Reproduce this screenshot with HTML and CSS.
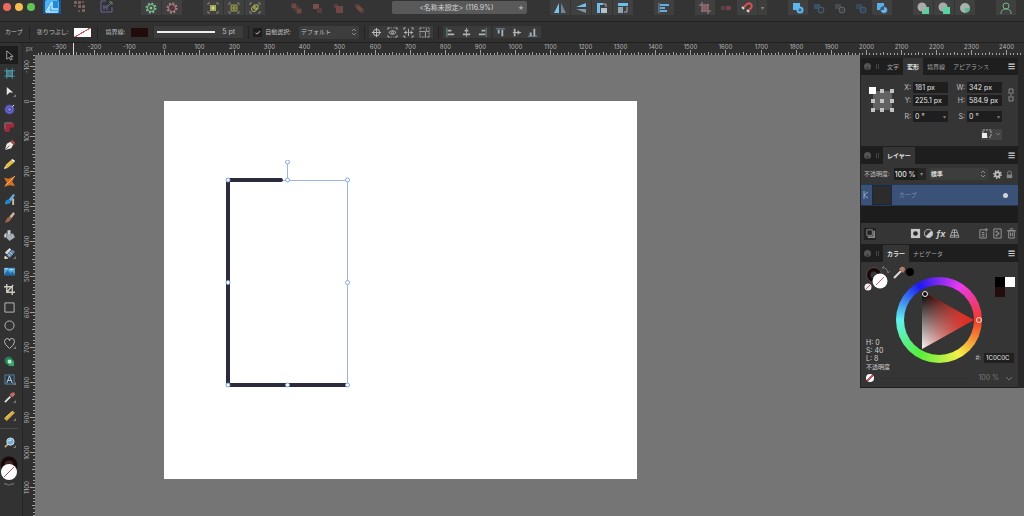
FILE: index.html
```html
<!DOCTYPE html>
<html lang="ja">
<head>
<meta charset="utf-8">
<title>名称未設定</title>
<link rel="stylesheet" href="styles.css">
</head>
<body>
<div class="app">
<header class="toolbar">
  <div class="lights"><button class="light red" aria-label="閉じる"></button><button class="light amber" aria-label="しまう"></button><button class="light green" aria-label="拡大"></button></div>
  <div class="personas">
    <button class="persona on" aria-label="デザイン"><svg viewBox="0 0 18 15"><rect x="2" y="0" width="14" height="13" rx="2" fill="#4db4ef"/><path d="M3 12 9 2v7h6M3 12h12M6 7v5" stroke="#d9f3ff" fill="none"/><path d="M10 1h5v7h-5z" fill="#2588d2"/></svg></button>
    <button class="persona" aria-label="ピクセル"><svg viewBox="0 0 18 15"><path d="M4 1h3v3H4zM8 1h3v3H8zM8 5h3v3H8zM12 5h3v3h-3zM12 9h3v3h-3z" fill="#79625e"/><path d="M12 1h2v2h-2zM4 5h2v2H4zM8 10h2v2H8z" fill="#615a58"/></svg></button>
    <button class="persona" aria-label="書き出し"><svg viewBox="0 0 18 15" fill="none" stroke="#69659a"><path d="M9 1H4v11h11V7M7 5v5M10 5v5M6 7h5"/><path d="M11 6l4-4M12 2h3v3" stroke="#62866f"/></svg></button>
  </div>
  <div class="group first">
    <button class="tb" aria-label="設定"><svg viewBox="0 0 12 12"><circle cx="6" cy="6" r="4.500" stroke="#75b88a" stroke-width="2" stroke-dasharray="2 1.500" fill="none"/><circle cx="6" cy="6" r="3.500" stroke="#82c495" fill="none"/><circle cx="6" cy="6" r="1.500" fill="#82c495"/></svg></button>
    <button class="tb" aria-label="初期設定"><svg viewBox="0 0 12 12"><circle cx="6" cy="6" r="4.500" stroke="#a98286" stroke-width="2" stroke-dasharray="2 1.500" fill="none"/><circle cx="6" cy="6" r="3.500" stroke="#a98286" fill="#4a3336"/><path d="M4 8l4-4" stroke="#774348"/></svg></button>
  </div>
  <div class="group">
    <button class="tb" aria-label="グループ化"><svg viewBox="0 0 12 12"><path d="M1 3V1h2M9 1h2v2M1 9v2h2M9 11h2V9" stroke="#858875" fill="none"/><path d="M3 3h6v6H3z" fill="#a8a95a"/><path d="M5 5h2v2H5z" fill="#e0df9b"/></svg></button>
    <button class="tb" aria-label="グループ解除"><svg viewBox="0 0 12 12"><path d="M1 3V1h2M9 1h2v2M1 9v2h2M9 11h2V9" stroke="#858875" fill="none"/><path d="M3 3h6v6H3zM3 6h6M6 3v6" stroke="#999c52" fill="#56582f"/></svg></button>
    <button class="tb" aria-label="複合"><svg viewBox="0 0 12 12"><path d="M1 3V1h2M9 1h2v2M1 9v2h2M9 11h2V9" stroke="#858875" fill="none"/><g stroke="#b7b85f" fill="none"><circle cx="5" cy="7" r="2.500"/><path d="M5 3h4v4H5z"/></g></svg></button>
  </div>
  <div class="group dim">
    <button class="tb" aria-label="最背面"><svg viewBox="0 0 12 12"><path d="M2 2h4v4H2zM7 7h4v4H7zM4 9l5-5" fill="#6e4943" stroke="#6e4943"/></svg></button>
    <button class="tb" aria-label="背面"><svg viewBox="0 0 12 12"><path d="M2 2h6v5H2z" fill="#795049"/><path d="M6 6h5v5H6z" fill="#51403d"/></svg></button>
    <button class="tb" aria-label="前面"><svg viewBox="0 0 12 12"><path d="M2 2h4v4H2z" fill="#55403d"/><path d="M4 4h7v7H4z" fill="#6f4843"/></svg></button>
    <button class="tb" aria-label="最前面"><svg viewBox="0 0 12 12"><path d="M2 2h4v4H2zM7 7h4v4H7z" fill="#51403d"/><path d="M3 6l3-3 4 4-3 3z" fill="#7a473f"/></svg></button>
  </div>
  <div class="doc"><span class="doc-name">&lt;名称未設定&gt; (116.9%)</span><span class="star">★</span></div>
  <div class="group">
    <button class="tb" aria-label="左右反転"><svg viewBox="0 0 12 12"><path d="M5 1v10H0z" fill="#78c3ed"/><path d="M7 1v10h5z" fill="#718594"/></svg></button>
    <button class="tb" aria-label="上下反転"><svg viewBox="0 0 12 12"><path d="M11 1v4H1z" fill="#6ebeed"/><path d="M11 11V7H1z" fill="#8294a2"/></svg></button>
    <button class="tb" aria-label="左に回転"><svg viewBox="0 0 12 12"><path d="M1 1h6v2H4v8H1z" fill="#6ebeed"/><path d="M5 6h6v5H5z" fill="#b8c2c9"/><path d="M7 2h3v3" stroke="#a7b0b5" fill="none"/></svg></button>
    <button class="tb" aria-label="右に回転"><svg viewBox="0 0 12 12"><path d="M1 1h10v3H1z" fill="#6ebeed"/><path d="M1 5h5v6H1z" fill="#90a6b5"/><path d="M10 5v5H7" stroke="#a7b0b5" fill="none"/></svg></button>
  </div>
  <div class="group"><button class="tb" aria-label="整列"><svg viewBox="0 0 12 12"><path d="M1 1v10" stroke="#8494a1"/><path d="M2 2h9v2H2zM2 5h5v2H2zM2 8h7v2H2z" fill="#63ace0"/></svg></button></div>
  <div class="group">
    <button class="tb" aria-label="グリッド"><svg viewBox="0 0 12 12"><path d="M3 0v10M9 2v10M0 3h10M2 9h10M3 6h6M6 3v6" stroke="#aa8389" fill="none"/><path d="M4 4h4v4H4z" fill="#905962"/></svg></button>
    <button class="tb flat" aria-label="ピクセル整合"><svg viewBox="0 0 12 12"><path d="M1 4h4v4H1z" fill="#5c4145"/><path d="M6 4h5v4H6z" fill="#734148"/></svg></button>
    <div class="split"><button class="tb" aria-label="スナップ"><svg viewBox="0 0 12 12"><path d="M2 6l4-4c3-2 6 1 4 4L7 9" stroke="#d9514e" stroke-width="2" fill="none"/><path d="M1 5l2 2M6 8l2 2" stroke="#d4d4d4" stroke-width="2"/></svg></button><button class="more" aria-label="スナップ設定">▾</button></div>
  </div>
  <div class="group">
    <button class="tb" aria-label="追加"><svg viewBox="0 0 12 12"><path d="M1 1h7v7H1z" fill="#5fb7ee"/><circle cx="8" cy="8" r="3.500" fill="#5fb7ee"/><path d="M6 8h4M8 6v4" stroke="#245e85"/></svg></button>
    <button class="tb flat" aria-label="減算"><svg viewBox="0 0 12 12"><path d="M1 2h6v5H1z" fill="#365267"/><circle cx="8" cy="8" r="3" fill="#303b43" stroke="#51606b"/></svg></button>
    <button class="tb flat" aria-label="交差"><svg viewBox="0 0 12 12"><path d="M1 2h6v5H1z" fill="#454b50"/><circle cx="8" cy="8" r="3" fill="#384149" stroke="#62676b"/></svg></button>
    <button class="tb flat" aria-label="型抜き"><svg viewBox="0 0 12 12"><path d="M1 2h6v5H1z" fill="#36495b"/><circle cx="8" cy="8" r="3" fill="#344253" stroke="#445f77"/></svg></button>
    <button class="tb" aria-label="分割"><svg viewBox="0 0 12 12"><path d="M1 1h7v7H1z" fill="#5baee6"/><circle cx="8" cy="8" r="3.500" fill="#6fb9ea" stroke="#36526a"/><path d="M5 5h3v3H5z" fill="#365b7d"/></svg></button>
  </div>
  <div class="group">
    <button class="tb" aria-label="背後に挿入"><svg viewBox="0 0 12 12"><path d="M5 5h7v7H5z" fill="#5bd0a0"/><circle cx="5" cy="5" r="4.500" fill="#a9aaaa"/></svg></button>
    <button class="tb" aria-label="上に挿入"><svg viewBox="0 0 12 12"><circle cx="5" cy="5" r="4.500" fill="#a9aaaa"/><path d="M5 5h7v7H5z" fill="#5bd0a0"/></svg></button>
    <button class="tb" aria-label="内側に挿入"><svg viewBox="0 0 12 12"><circle cx="6" cy="6" r="5" fill="#a9b1ad"/><path d="M6 6h5a5 5 0 0 1-5 5z" fill="#5bbb95"/></svg></button>
  </div>
  <div class="group"><button class="tb" aria-label="アカウント"><svg viewBox="0 0 12 12" fill="none" stroke="#78b684"><circle cx="6" cy="4" r="3"/><path d="M1 12c0-4 2-5 5-5s5 1 5 5"/></svg></button></div>
</header>

<section class="context">
  <span class="lead">カーブ</span><i class="sep"></i>
  <span>塗りつぶし:</span><button class="swatch none" aria-label="塗りつぶし"></button><i class="sep"></i>
  <span>境界線:</span><button class="swatch stroke" aria-label="境界線"></button>
  <button class="width"><i></i>5 pt</button><i class="sep tight"></i>
  <label class="auto"><input type="checkbox" checked>自動選択:</label>
  <select class="mode" aria-label="自動選択"><option>デフォルト</option></select><i class="sep tight"></i>
  <div class="minis">
    <button aria-label="中心を表示"><svg viewBox="0 0 12 12" fill="none" stroke="#c4c4c4"><circle cx="6" cy="6" r="3.500"/><path d="M6 1v10M1 6h10"/></svg></button>
    <button aria-label="選択を隠す"><svg viewBox="0 0 12 12" fill="none" stroke="#bbb"><path d="M1 3V1h2M9 1h2v2M1 9v2h2M9 11h2V9M4 1h1M7 1h1M4 11h1M7 11h1"/><path d="M2 6q4-4 8 0q-4 4-8 0"/><circle cx="6" cy="6" r="1"/></svg></button>
    <button aria-label="変形"><svg viewBox="0 0 12 12" fill="none" stroke="#bbb"><path d="M1 3V1h2M9 1h2v2M1 9v2h2M9 11h2V9M6 2v8M1 6h4M7 6h4M3 4v4M9 4v4"/></svg></button>
    <button aria-label="サイクル"><svg viewBox="0 0 12 12" fill="none" stroke="#aaa"><path d="M1 1h10v10M1 1v10h10" stroke-dasharray="2 1"/><path d="M1 5h6v6M8 2v3h3"/></svg></button>
  </div><i class="sep tight"></i>
  <div class="minis">
    <button aria-label="左揃え"><svg viewBox="0 0 12 12"><path d="M2 1v10" stroke="#68957a"/><path d="M3 3h4v2H3zM3 7h7v2H3z" fill="#aab5ae"/></svg></button>
    <button aria-label="中央揃え"><svg viewBox="0 0 12 12"><path d="M4 3h4v2H4zM2 7h8v2H2z" fill="#aeb5b1"/><path d="M6 1v10" stroke="#aaa"/></svg></button>
    <button aria-label="右揃え"><svg viewBox="0 0 12 12"><path d="M10 1v10" stroke="#68957a"/><path d="M5 3h4v2H5zM2 7h7v2H2z" fill="#aab5ae"/></svg></button>
  </div>
  <div class="minis">
    <button aria-label="上揃え"><svg viewBox="0 0 12 12"><path d="M1 2h10" stroke="#7295b0"/><path d="M3 3h2v4H3zM7 3h2v7H7z" fill="#a9b2b9"/></svg></button>
    <button aria-label="上下中央揃え"><svg viewBox="0 0 12 12"><path d="M3 2h2v8H3zM7 4h2v4H7z" fill="#aaa"/><path d="M2 6h9" stroke="#bbb"/></svg></button>
    <button aria-label="下揃え"><svg viewBox="0 0 12 12"><path d="M1 10h10" stroke="#7295b0"/><path d="M3 6h2v4H3zM7 2h2v8H7z" fill="#a9b2b9"/></svg></button>
  </div>
</section>

<main class="body">
<nav class="tools" aria-label="ツール">
  <button class="tool on" aria-label="移動"><svg viewBox="0 0 12 12"><path d="M3 1l7 6H7l2 3-2 1-1-3-3 2z" fill="#151515" stroke="#aaa"/></svg></button>
  <button class="tool" aria-label="アートボード"><svg viewBox="0 0 12 12"><path d="M3 0v12M9 0v12M0 3h12M0 9h12" stroke="#3c8d98"/><path d="M3 3h6v6H3z" fill="#43707b" stroke="#5aa9b1"/></svg></button>
  <button class="tool fly" aria-label="ノード"><svg viewBox="0 0 12 12"><path d="M3 1l7 6H6l-3 3z" fill="#e4e4e4"/></svg></button>
  <button class="tool" aria-label="等高線"><svg viewBox="0 0 12 12"><circle cx="6" cy="6" r="5.500" fill="#4f4bac"/><circle cx="6" cy="6" r="3.500" fill="none" stroke="#7977c4"/><circle cx="6" cy="6" r="1.500" fill="#8b89d3"/><path d="M9 3l2-2" stroke="#fff"/></svg></button>
  <button class="tool" aria-label="コーナー"><svg viewBox="0 0 12 12"><path d="M1 11V5q0-4 4-4h6v5H8q-2 0-2 5z" fill="#a5273d"/><path d="M1 8V1h8" stroke="#8b8588" fill="none"/></svg></button>
  <button class="tool" aria-label="ペン"><svg viewBox="0 0 12 12"><path d="M1 11l2-7 4-2 3 3-2 4z" fill="#eee8e4"/><path d="M7 1l2-1 3 3-1 3z" fill="#bd4b46"/><path d="M1 11l5-5" stroke="#666"/></svg></button>
  <button class="tool" aria-label="鉛筆"><svg viewBox="0 0 12 12"><path d="M1 9l7-7 3 3-7 6z" fill="#e3b93d"/><path d="M1 9l3 2-4 1z" fill="#f4e7cf"/><path d="M8 2l1-1 3 2-1 2z" fill="#fff"/><path d="M2 8l6-5" stroke="#f4da80"/></svg></button>
  <button class="tool" aria-label="ベクトルブラシ"><svg viewBox="0 0 12 12"><path d="M0 2l5 1 7-3-3 6 3 5-6-1-6 2 3-5z" fill="#d47223"/><path d="M2 10L12 0" stroke="#f5b276"/></svg></button>
  <button class="tool" aria-label="ペイントブラシ"><svg viewBox="0 0 12 12"><path d="M5 6l5-6 2 1-4 7z" fill="#66a9df"/><path d="M1 11q0-5 4-5l3 2q-2 4-7 3" fill="#2684cf"/><path d="M10 5v7" stroke="#dabea1" stroke-width="2"/></svg></button>
  <button class="tool" aria-label="ナイフ"><svg viewBox="0 0 12 12"><path d="M6 5l4-5 2 2-4 5z" fill="#cbb3a0"/><path d="M1 12l2-5 3-2 2 2-2 3z" fill="#a26650"/></svg></button>
  <button class="tool" aria-label="塗りつぶしツール"><svg viewBox="0 0 12 12"><path d="M4 3l6 1 2 4-6 4-4-4z" fill="#a6adb7"/><path d="M4 3V0h3v6M0 5l3-2v5H0z" fill="#d4d7dc" stroke="#777d87"/></svg></button>
  <button class="tool fly" aria-label="透明"><svg viewBox="0 0 12 12"><path d="M1 5l5-5 2 2-5 5z" fill="#d6d7da"/><path d="M3 8l6-6 3 2-6 7z" fill="#5b8bc0"/><path d="M1 9l3 2-3 1zM6 4l3 3M4 6l3 3" fill="#e8c58d" stroke="#efe0c0"/></svg></button>
  <button class="tool" aria-label="画像配置"><svg viewBox="0 0 12 12"><path d="M0 2h12v8H0z" fill="#4ea3d9"/><path d="M0 9l4-4 3 3 2-2 3 3v1H0z" fill="#226cab"/><path d="M6 4h4M1 3h3" stroke="#d4ecf6"/></svg></button>
  <button class="tool" aria-label="切り抜き"><svg viewBox="0 0 12 12"><path d="M3 0v9h9M0 3h9v9M3 9l7-8" fill="none" stroke="#d0cbc2" stroke-width="1.500"/></svg></button>
  <button class="tool" aria-label="長方形"><svg viewBox="0 0 12 12"><path d="M1 1h10v10H1z" fill="none" stroke="#c2c2c2"/></svg></button>
  <button class="tool" aria-label="楕円"><svg viewBox="0 0 12 12"><circle cx="6" cy="6" r="5" fill="none" stroke="#c2c2c2"/></svg></button>
  <button class="tool fly" aria-label="ハート"><svg viewBox="0 0 12 12"><path d="M6 11.500Q.5 7 .5 4t3-3.500Q6 .5 6 3 6 .5 8.500.5q3 0 3 3.500T6 11.500z" fill="none" stroke="#c2c2c2"/></svg></button>
  <button class="tool" aria-label="シェイプビルダー"><svg viewBox="0 0 12 12"><circle cx="5" cy="5" r="4.500" fill="#287b59"/><path d="M5 5h6v6H5z" fill="#35a56c"/><path d="M4 4h4v4H4z" fill="#b3efc9"/></svg></button>
  <button class="tool fly" aria-label="テキスト"><svg viewBox="0 0 12 12"><path d="M1 1h10v10H1z" fill="#283949" stroke="#5586a5"/><path d="M3 10l3-8 3 8M4 7h4" fill="none" stroke="#c6d2df"/></svg></button>
  <button class="tool fly" aria-label="スポイト"><svg viewBox="0 0 12 12"><path d="M1 11l6-6" stroke="#ddd" stroke-width="2"/><path d="M6 3l3 3 3-3q0-4-4-2z" fill="#c06862"/></svg></button>
  <button class="tool fly" aria-label="計測"><svg viewBox="0 0 12 12"><path d="M0 9l9-8 3 2-9 9z" fill="#d7aa3d"/><path d="M2 8l8-7" stroke="#f2da7b"/></svg></button>
  <hr class="rule">
  <button class="tool fly" aria-label="ズーム"><svg viewBox="0 0 12 12"><path d="M1 11l4-4" stroke="#cca369" stroke-width="2"/><circle cx="7" cy="5" r="4" fill="#79add8" stroke="#d6e5ee"/><path d="M5 4l3-1" stroke="#fff"/></svg></button>
  <button class="inks" aria-label="カラー"><svg viewBox="0 0 18 32"><circle cx="9" cy="9" r="6.500" fill="#3a2a29" stroke="#170a09" stroke-width="4"/><circle cx="9" cy="16" r="8" fill="#fff"/><path d="M4 21L14 11" stroke="#c34b53"/><path d="M5 27q4 4 8 0M5 27v2M13 27v2" fill="none" stroke="#777"/></svg></button>
</nav>

<section class="work">
  <span class="unit">px</span>
  <svg class="ruler-x" id="rx" aria-hidden="true"></svg>
  <svg class="ruler-y" id="ry" aria-hidden="true"></svg>
  <div class="canvas">
    <div class="page"></div>
    <svg class="art" viewBox="0 0 140 240">
      <path d="M72.500 3v17.500M13 20.500h119.500V225H13V20.500" fill="none" stroke="#9cb6dc"/>
      <path d="M66 20H13v205h119" fill="none" stroke="#2b2b3b" stroke-width="4" stroke-linecap="round" stroke-linejoin="round"/>
      <g fill="#fff" stroke="#86a9d9"><circle cx="72.500" cy="2" r="2"/><circle cx="13" cy="20" r="2"/><circle cx="72.500" cy="20" r="2"/><circle cx="132.500" cy="20" r="2"/><circle cx="13" cy="122.500" r="2"/><circle cx="132.500" cy="122.500" r="2"/><circle cx="13" cy="225" r="2"/><circle cx="72.500" cy="225" r="2"/><circle cx="132.500" cy="225" r="2"/></g>
    </svg>
  </div>
</section>

<aside class="studio">
  <section class="panel">
    <header class="tabs"><button class="close" aria-label="閉じる">×</button><i class="grip"></i><button class="tab">文字</button><button class="tab on">変形</button><button class="tab">境界線</button><button class="tab">アピアランス</button><button class="menu" aria-label="メニュー">☰</button></header>
    <div class="transform">
      <svg class="anchor" viewBox="0 0 26 26"><path d="M4 4h19v19H4z" fill="#626262"/><g fill="#c2c2c2"><path d="M11 2h4v4h-4zM21 2h4v4h-4zM2 12h4v4H2zM11 12h4v4h-4zM21 12h4v4h-4zM2 21h4v4H2zM11 21h4v4h-4zM21 21h4v4h-4z"/></g><path d="M0 0h7v7H0z" fill="#fff"/></svg>
      <div class="fields">
        <label>X:<input value="181 px"></label><label>W:<input value="342 px"></label>
        <label>Y:<input value="225.1 px"></label><label>H:<input value="584.9 px"></label>
        <label class="drop">R:<input value="0 °"></label><label class="drop">S:<input value="0 °"></label>
      </div>
      <button class="link" aria-label="縦横比"><svg viewBox="0 0 6 14" fill="none" stroke="#8b8b8b"><path d="M1 6V1h4v5M1 8v5h4V8M3 4v6"/></svg></button>
      <button class="scale" aria-label="拡大縮小"><svg viewBox="0 0 20 10"><path d="M2 1h8v7H2z" fill="none" stroke="#aaa" stroke-dasharray="2 1"/><path d="M1 4h5v5H1z" fill="#eee"/><path d="M15 4l2 2 2-2" fill="none" stroke="#777"/></svg></button>
    </div>
  </section>
  <section class="panel">
    <header class="tabs"><button class="close" aria-label="閉じる">×</button><i class="grip"></i><button class="tab on">レイヤー</button><button class="menu" aria-label="メニュー">☰</button></header>
    <div class="opacity">
      <label>不透明度:<input value="100 %"></label><button class="arrow" aria-label="不透明度の選択">▾</button>
      <select aria-label="描画モード"><option>標準</option></select>
      <button class="ico" aria-label="ブレンド範囲"><svg viewBox="0 0 10 10"><circle cx="5" cy="5" r="2.500" fill="none" stroke="#bdbdbd" stroke-width="2"/><circle cx="5" cy="5" r="4" fill="none" stroke="#bdbdbd" stroke-width="2" stroke-dasharray="1.500 1.600"/></svg></button>
      <button class="ico" aria-label="ロック"><svg viewBox="0 0 10 10"><path d="M2 5h6v4H2z" fill="#858585"/><path d="M3 5V2q2-2 4 0v3" fill="none" stroke="#858585"/></svg></button>
    </div>
    <div class="layer"><svg class="knot" viewBox="0 0 6 8"><path d="M1 0v8M5 1L1 4l4 3" fill="none" stroke="#92a7c7"/></svg><i class="thumb"></i><span>カーブ</span><input type="checkbox" checked aria-label="表示"></div>
    <div class="blank"></div>
    <footer class="foot">
      <button class="boxed" aria-label="編集"><svg viewBox="0 0 12 12" fill="none" stroke="#888"><path d="M2 2h6v6H2z"/><path d="M4 9v1h6V4H9" stroke-width="2"/></svg></button>
      <span class="mid">
      <button aria-label="マスク"><svg viewBox="0 0 12 12"><path d="M1 1h10v10H1z" fill="#c7c7c7"/><circle cx="6" cy="6" r="2.500" fill="#292929"/></svg></button>
      <button aria-label="調整"><svg viewBox="0 0 12 12"><circle cx="6" cy="6" r="4.500" fill="none" stroke="#bbb"/><path d="M9 3a4 4 0 0 1-6 6z" fill="#ccc"/></svg></button>
      <button class="fx">fx</button>
      <button aria-label="ライブフィルタ"><svg viewBox="0 0 12 12" fill="none" stroke="#aaa"><path d="M4 2h4l3 8H1zM3 5h6M2 8h8M6 2v8"/></svg></button></span>
      <button aria-label="新規レイヤー"><svg viewBox="0 0 12 12" fill="none" stroke="#999"><path d="M8 2H2v9h7V5M9 0v4M7 2h4M4 5h3M4 7h3M4 9h3"/></svg></button>
      <button aria-label="新規ピクセル"><svg viewBox="0 0 12 12" fill="none" stroke="#999"><path d="M2 1h8v10H2z"/><path d="M4 3h2v2H4zM6 5h2v2H6zM4 7h2v2H4z" fill="#999" stroke="none"/></svg></button>
      <button aria-label="削除"><svg viewBox="0 0 12 12" fill="none" stroke="#999"><path d="M3 3h6v8H3zM1 3h10M4 1h4M5 5v4M7 5v4"/></svg></button>
    </footer>
  </section>
  <section class="panel">
    <header class="tabs"><button class="close" aria-label="閉じる">×</button><i class="grip"></i><button class="tab on">カラー</button><button class="tab">ナビゲータ</button><button class="menu" aria-label="メニュー">☰</button></header>
    <div class="color">
      <svg class="pair" viewBox="0 0 56 28"><circle cx="14" cy="11" r="5.500" fill="none" stroke="#160b0b" stroke-width="4"/><circle cx="14" cy="11" r="7.500" fill="none" stroke="#564747"/><circle cx="20" cy="17" r="7.500" fill="#fff"/><path d="M16 21l8-8" stroke="#d75561"/><circle cx="8" cy="23" r="3.500" fill="#eee"/><path d="M6 25l4-4" stroke="#c65b63"/><path d="M22 4q5-1 6 5M22 4l2-2M28 9l2-2" fill="none" stroke="#777"/><path d="M34 14l7-7" stroke="#ddd" stroke-width="2"/><path d="M39 5l4 4 2-3q0-4-4-3z" fill="#b57970"/><circle cx="50" cy="8" r="4" fill="#000"/></svg>
      <div class="wheel"><i class="hole"></i><i class="tri"></i><i class="ring hue"></i><i class="ring sat"></i></div>
      <div class="recent"><i></i><i class="w"></i><i class="m"></i></div>
      <div class="values"><span>H: 0</span><span>S: 40</span><span>L: 8</span><span class="cap">不透明度</span></div>
      <label class="hex">#:<input value="1C0C0C"></label>
      <div class="alpha"><button class="dot" aria-label="なし"></button><i class="track"></i><span class="pct">100 %</span><svg class="chev" viewBox="0 0 8 8"><path d="M1 3l3 3 3-3" fill="none" stroke="#777"/></svg></div>
    </div>
  </section>
</aside>
</main>
</div>
<script src="rulers.js"></script>
</body>
</html>
```

FILE: styles.css
```css
* { box-sizing: border-box; }
body { margin: 0; background: #737373; color: #c0c0c0; font: 6px/10px Inter, "Noto Sans CJK JP", sans-serif; }
button, input, select { margin: 0; padding: 0; border: 0; background: none; color: inherit; font: inherit; }
svg { display: block; }
i { display: block; font-style: normal; }
.app { display: flex; flex-direction: column; height: 100vh; overflow: hidden; }

.toolbar { display: flex; gap: 21px; flex: none; height: 22px; padding: 0 8px 0 3px; background: #343434; border-bottom: 1px solid #222; }
.lights { display: flex; gap: 4px; padding-top: 3px; }
.light { width: 8px; height: 8px; border-radius: 50%; }
.red { background: #ee6a5f; }
.amber { background: #f5bd4f; }
.green { background: #61c454; }
.personas { display: flex; gap: 9px; margin: 0 5px 0 -13px; }
.persona { width: 18px; height: 14px; }
.persona.on { background: #20528a; }
.persona svg { width: 18px; height: 15px; }
.group { display: flex; gap: 1px; }
.tb { display: grid; place-items: center; width: 20px; height: 15px; background: #404040; }
.tb svg { width: 12px; height: 12px; }
.dim .tb, .tb.flat { background: none; }
.split { display: flex; gap: 1px; }
.more { width: 9px; height: 15px; background: #3e3e3e; color: #888; }
.doc { display: flex; flex: 1; align-items: center; height: 13px; margin: 1px 2px 0; padding: 0 3px; border-radius: 2px; background: #595959; color: #d4d4d4; font-size: 7px; white-space: nowrap; }
.doc-name { flex: 1; text-align: center; }
.star { color: #aaa; font-size: 6px; }

.context { display: flex; align-items: center; gap: 6px; flex: none; height: 21px; padding-left: 5px; background: #303030; border-bottom: 1px solid #202020; white-space: nowrap; }
.sep { width: 1px; height: 13px; margin-right: 1px; background: #222; }
.sep.tight { margin: 0 -2px 0 -1px; }
.swatch { width: 17px; height: 9px; }
.none { background: linear-gradient(150deg, #fff 46%, #c9555d 47%, #c9555d 53%, #fff 54%); }
.stroke { background: #210b0b; }
.width { display: flex; align-items: center; gap: 7px; width: 89px; height: 12px; padding-left: 3px; background: #3c3c3c; font-size: 7px; }
.width i { width: 58px; height: 2px; background: #eee; }
.auto { display: flex; align-items: center; gap: 3px; }
.auto input { appearance: none; display: grid; place-items: center; width: 9px; height: 9px; background: #1d1d1d; }
.auto input::before { content: "✓"; color: #ddd; font-size: 7px; }
.mode { width: 60px; height: 13px; margin-left: 2px; padding-left: 2px; border-radius: 2px; }
select { appearance: none; background: #3d3d3d url("data:image/svg+xml,%3Csvg xmlns='http://www.w3.org/2000/svg' viewBox='0 0 6 8' fill='none' stroke='%23888'%3E%3Cpath d='M1 3l2-2 2 2M1 5l2 2 2-2'/%3E%3C/svg%3E") no-repeat right 2px center / 6px 8px; }
.minis { display: flex; }
.minis + .minis { margin-left: -4px; }
.minis button { display: grid; place-items: center; width: 16px; height: 12px; background: #3b3b3b; }
.minis svg { width: 11px; height: 11px; }

.body { position: relative; display: flex; flex: 1; min-height: 0; }
.tools { display: flex; flex-direction: column; flex: none; width: 23px; padding-top: 3px; background: #323232; border-right: 1px solid #252525; }
.tool { position: relative; display: grid; place-items: center; flex: none; width: 18px; height: 18px; }
.tool svg { width: 11px; height: 11px; }
.tool.on { background: #1d1d1d; }
.fly::after { content: ""; position: absolute; right: 2px; bottom: 3px; border: solid transparent; border-width: 3px 0 0 3px; border-right: 3px solid #777; }
.rule { width: 18px; height: 1px; margin: 4px 0; border: 0; background: #4b4b4b; }
.inks { width: 18px; height: 32px; margin-top: 5px; }

.work { display: grid; grid-template: 12px 1fr / 12px 1fr; flex: 1; min-width: 0; background: #303030; }
.unit { padding-left: 3px; line-height: 12px; color: #999; }
.ruler-x, .ruler-y { width: 100%; height: 100%; overflow: hidden; }
.work svg text { fill: #b4b4b4; font-size: 6px; }
.canvas { position: relative; overflow: hidden; background: #757575; }
.page { position: absolute; left: 129px; top: 46px; width: 473px; height: 378px; background: #fff; }
.art { position: absolute; left: 180px; top: 105px; width: 140px; height: 240px; }

.studio { position: absolute; right: 0; top: 12px; width: 164px; padding: 3px 6px 0 0; background: #282828; }
.panel { background: #353535; border-left: 1px solid #222; border-bottom: 1px solid #1f1f1f; }
.tabs { display: flex; align-items: center; height: 17px; padding: 0 3px; background: #1e1e1e; color: #a4a4a4; white-space: nowrap; }
.close { display: grid; place-items: center; width: 7px; height: 7px; border-radius: 50%; background: #555; color: #1e1e1e; }
.grip { width: 3px; height: 5px; margin: 0 4px 0 5px; border: solid #444; border-width: 0 1px; }
.tab { height: 17px; padding: 0 4px; }
.tab.on { background: #353535; color: #e4e4e4; font-weight: bold; }
.menu { margin-left: auto; color: #ccc; font-size: 7px; }

.transform { display: grid; grid-template-columns: 40px 1fr 16px; height: 71px; padding-top: 7px; }
.anchor { width: 26px; height: 26px; margin: 5px 0 0 8px; }
.fields { display: grid; grid-template-columns: 1fr 1fr; gap: 2px 7px; align-content: start; }
.fields label { display: grid; grid-template-columns: 10px 1fr; gap: 2px; align-items: center; text-align: right; font-size: 7px; }
.fields input { min-width: 0; width: 100%; height: 11px; padding-left: 2px; background: #1e1e1e; color: #e6e6e6; }
.fields .drop { position: relative; margin-top: 3px; }
.drop::after { content: "▾"; position: absolute; right: 2px; color: #777; font-size: 6px; }
.link { height: 14px; margin: 6px 0 0 2px; }
.link svg { width: 6px; height: 14px; margin: auto; }
.scale { grid-column: 2; justify-self: end; width: 21px; height: 11px; background: #444; }
.scale svg { width: 20px; height: 10px; }

.opacity { display: flex; align-items: center; height: 20px; padding: 0 3px; }
.opacity label { display: flex; align-items: center; gap: 4px; white-space: nowrap; }
.opacity input { width: 24px; height: 12px; padding-left: 1px; background: #1e1e1e; color: #e6e6e6; font-size: 7px; font-weight: 500; }
.arrow { width: 8px; height: 12px; background: #252525; color: #888; }
.opacity select { flex: 1; min-width: 0; height: 12px; margin: 0 3px; padding-left: 2px; border-radius: 2px; color: #ddd; font-weight: bold; }
.ico { width: 12px; }
.ico svg { width: 9px; height: 9px; margin: auto; }
.layer { display: flex; align-items: center; height: 22px; background: #3a5278; border: solid #263750; border-width: 1px 0; color: #8091ac; }
.knot { width: 6px; height: 8px; margin: 0 3px 0 2px; }
.thumb { width: 20px; height: 20px; border: 1px solid #1b2940; background: #2c2c2c; }
.layer span { flex: 1; padding-left: 7px; }
.layer input { appearance: none; width: 5px; height: 5px; margin-right: 10px; border-radius: 50%; background: #d0d4da; }
.blank { height: 17px; background: #1c1c1c; }
.foot { display: flex; align-items: center; gap: 2px; height: 21px; padding: 0 1px 0 3px; }
.foot svg { width: 11px; height: 11px; }
.foot button { display: grid; place-items: center; width: 12px; height: 12px; }
.foot .boxed { background: #222; }
.mid { display: flex; gap: 1px; flex: 1; padding-left: 31px; }
.foot .fx { color: #ccc; font: italic bold 9px/12px Inter, sans-serif; }

.color { display: grid; grid-template: 83px 15px 11px 14px / 35px 1fr 27px; height: 125px; }
.pair { grid-area: 1 / 1 / 2 / 3; width: 56px; height: 28px; margin: 2px 0 0 -1px; }
.wheel { position: relative; grid-area: 1 / 2 / 4 / 3; width: 86px; height: 86px; margin-top: 15px; border-radius: 50%; background: conic-gradient(from 90deg, #f23a28, #f4f04a, #55ee3c, #62f0ee, #1a1af0, #e83af0, #f23a28); }
.hole { position: absolute; inset: 8px; border-radius: 50%; background: #353535; }
.tri { position: absolute; left: 26px; top: 14px; width: 52px; height: 58px; background: #e02e26; clip-path: polygon(0 0, 100% 50%, 0 100%); }
.tri::before { content: ""; position: absolute; inset: 0; background: linear-gradient(#111 10%, #eee 95%); mask: linear-gradient(90deg, #000, transparent 85%); }
.ring { position: absolute; width: 6px; height: 6px; border: 1px solid #eee; border-radius: 50%; }
.hue { left: 80px; top: 40px; }
.sat { left: 26px; top: 14px; background: #111; }
.recent { display: grid; grid-template-columns: 10px 10px; grid-auto-rows: 10px; grid-area: 1 / 3; margin: 15px 0 0 4px; align-content: start; }
.recent i { background: #000; }
.recent .w { background: #fff; }
.recent .m { background: #220c0c; }
.values { display: flex; flex-direction: column; grid-area: 1 / 1 / 4 / 2; justify-content: end; padding-left: 5px; line-height: 8px; white-space: nowrap; color: #d0d0d0; font-size: 7px; }
.cap { font-size: 6px; }
.hex { display: flex; align-items: center; gap: 3px; grid-area: 2 / 2 / 4 / 4; justify-self: end; align-self: center; margin-right: 4px; }
.hex input { width: 30px; height: 10px; padding-left: 2px; background: #202020; color: #ddd; font-weight: 500; }
.alpha { display: flex; align-items: center; grid-area: 4 / 1 / 5 / 4; padding: 0 5px; gap: 6px; color: #777; }
.dot { width: 8px; height: 8px; border-radius: 50%; background: linear-gradient(135deg, #fff 42%, #c9555d 43%, #c9555d 57%, #fff 58%); }
.track { flex: 1; height: 1px; background: #303030; }
.pct { font-size: 7px; }
.chev { width: 8px; height: 8px; }
```

FILE: rulers.js
```js
const NS = "http://www.w3.org/2000/svg";
const STEP = 3.509;

function add(parent, name, attrs, text) {
  const node = document.createElementNS(NS, name);
  for (const key in attrs) node.setAttribute(key, attrs[key]);
  if (text !== undefined) node.textContent = text;
  parent.appendChild(node);
}

function ruler(id, origin, vertical) {
  const svg = document.getElementById(id);
  const length = vertical ? svg.clientHeight : svg.clientWidth;
  let d = "";
  for (let n = Math.ceil(-origin / STEP); origin + n * STEP < length; n++) {
    const p = Math.round(origin + n * STEP) + 0.5;
    const size = n % 10 === 0 ? 5 : n % 5 === 0 ? 3 : 2;
    d += vertical ? `M12 ${p}h${-size}` : `M${p} 12v${-size}`;
    if (n % 10 === 0) {
      const at = vertical
        ? { transform: `translate(6 ${p}) rotate(-90)`, "text-anchor": "middle" }
        : { x: p, y: 6, "text-anchor": "middle" };
      add(svg, "text", at, n * 10);
    }
  }
  add(svg, "path", { d, stroke: "#a0a0a0", fill: "none" });
  if (!vertical) add(svg, "path", { d: "M38.5 0v12", stroke: "#ddd" });
}

ruler("rx", 129, false);
ruler("ry", 46, true);
```
